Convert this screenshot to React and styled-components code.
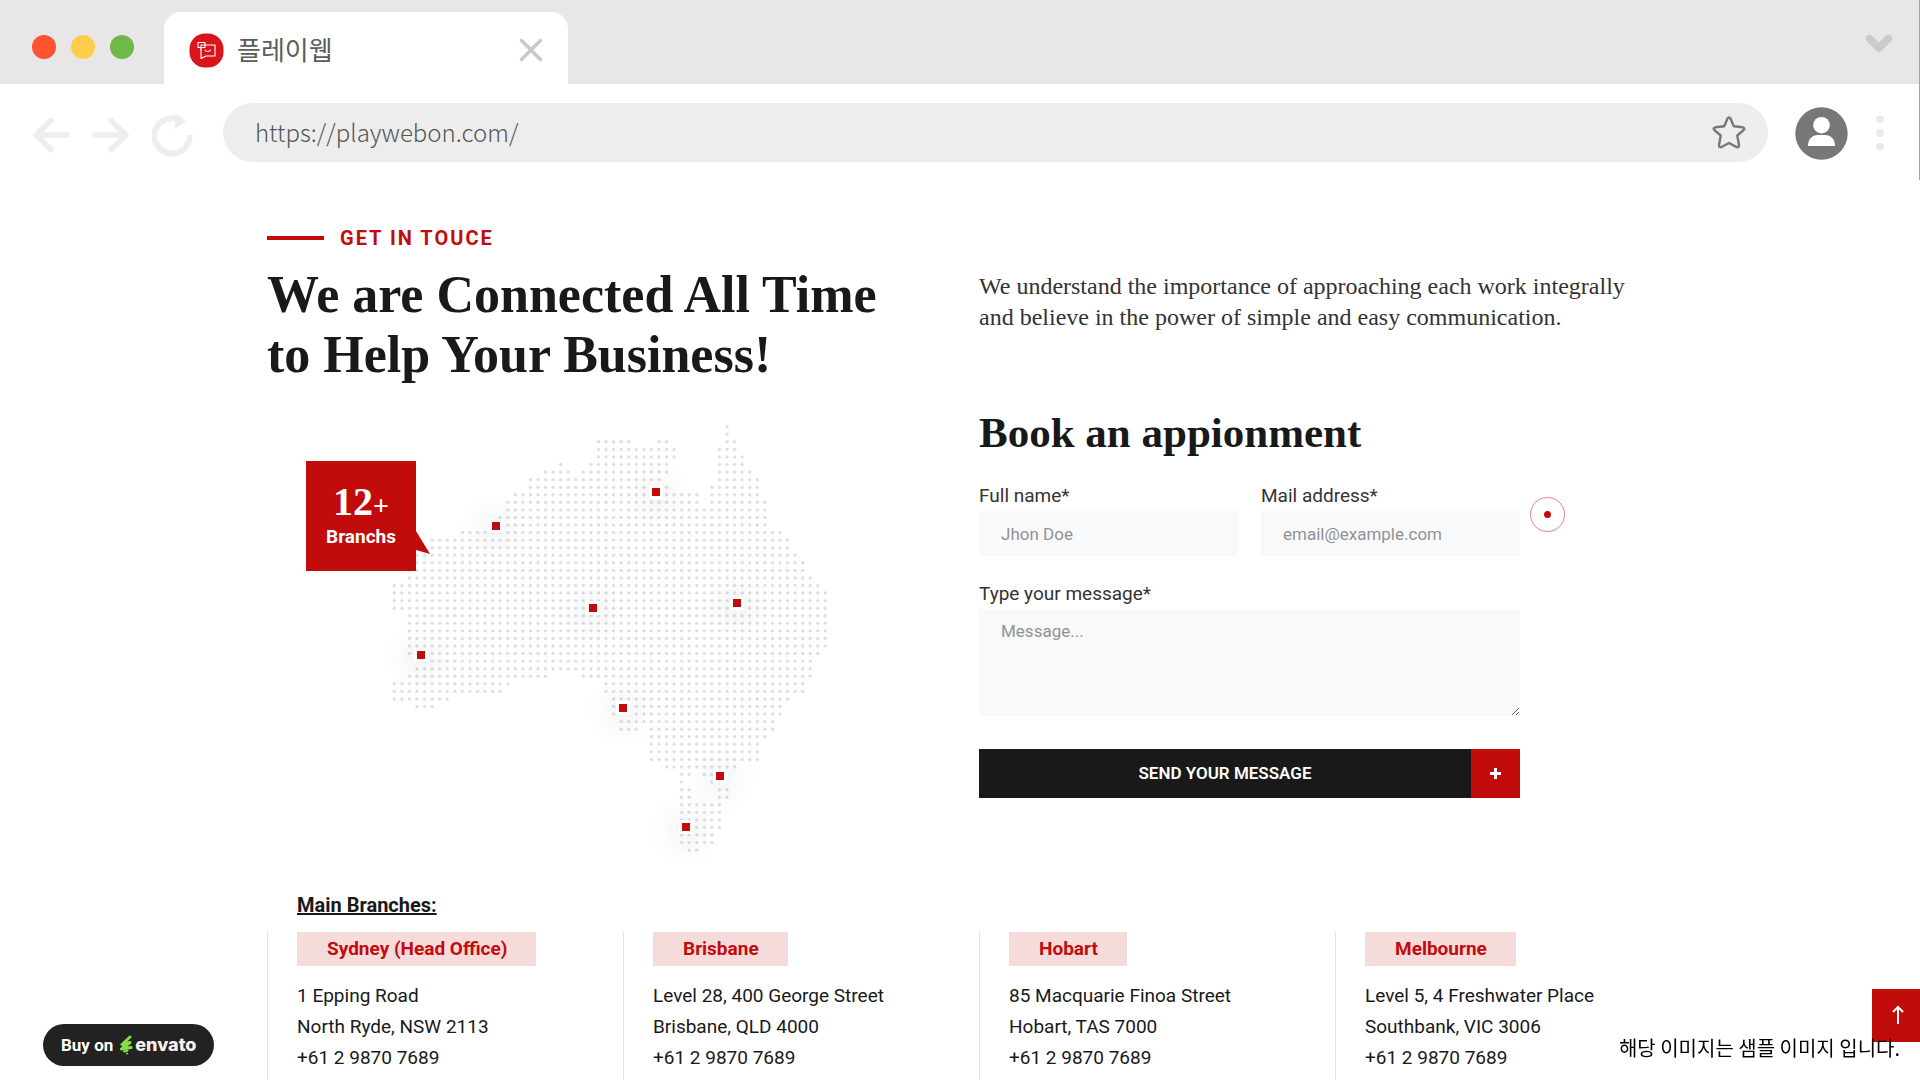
import React from "react";
import styled, { createGlobalStyle } from "styled-components";

const RED = "#c20b0b";
const INK = "#191919";
const SANS = 'Roboto, "Liberation Sans", sans-serif';
const SERIF = '"Liberation Serif", "Times New Roman", serif';
const KOREAN = '"Noto Sans CJK KR", "Noto Sans", sans-serif';

const GlobalStyle = createGlobalStyle`
  *, *::before, *::after { box-sizing: border-box; }
  body { margin: 0; background: #fff; color: ${INK}; font-family: ${SANS}; }
  h1, h2, h3, p, address { margin: 0; font-style: normal; }
  button, input, textarea { font: inherit; border: 0; padding: 0; outline: 0; border-radius: 0; }
  button { background: none; cursor: pointer; }
`;

const Page = styled.div`
  min-height: 100vh;
  display: flex;
  flex-direction: column;
`;

/* Browser frame */
const Browser = styled.header`
  height: 180px;
  border-right: 1px solid #a3a3a3;
`;
const TabStrip = styled.div`
  display: flex;
  align-items: flex-end;
  height: 84px;
  padding-right: 26px;
  background: #e7e7e7;
  border-bottom: 1px solid #e2e2e2;
`;
const WindowDots = styled.div`
  display: flex;
  gap: 15px;
  width: 164px;
  padding-left: 32px;
  margin-bottom: 24px;
`;
const WindowDot = styled.button`
  width: 24px;
  height: 24px;
  border-radius: 50%;
  background: ${(p) => p.$color};
`;
const Tab = styled.div`
  display: flex;
  align-items: center;
  width: 404px;
  height: 72px;
  margin-bottom: -1px;
  padding: 4px 25px 0 25px;
  border-radius: 17px 17px 0 0;
  background: #fff;
`;
const TabTitle = styled.span`
  flex: 1;
  margin-left: 13px;
  padding-bottom: 2px;
  font: 400 26px/36px ${KOREAN};
  color: #5c5c5c;
`;
const IconButton = styled.button`
  display: flex;
  align-items: center;
  justify-content: center;
  flex: none;
  svg { display: block; }
`;
const StripMenu = styled(IconButton)`
  margin: 0 0 30px auto;
`;
const Toolbar = styled.div`
  display: flex;
  align-items: center;
  height: 97px;
  padding: 0 35px 0 32px;
`;
const NavButtons = styled.div`
  display: flex;
  align-items: center;
  gap: 22px;
  width: 191px;
  padding-top: 5px;
`;
const AddressBar = styled.div`
  flex: 1;
  display: flex;
  align-items: center;
  height: 59px;
  padding: 0 22px 0 32px;
  border-radius: 30px;
  background: #ededed;
`;
const AddressInput = styled.input`
  flex: 1;
  min-width: 0;
  padding-bottom: 2px;
  background: none;
  font: 300 24px/36px ${KOREAN};
  color: #555;
`;
const Avatar = styled(IconButton)`
  margin: 2px 28px 0 27px;
`;

/* Contact page */
const Main = styled.main`
  flex: 1;
  display: flex;
  flex-direction: column;
  padding: 46px 229px 0 267px;
`;
const Split = styled.section`
  display: grid;
  grid-template-columns: 1fr 1fr;
`;
const Eyebrow = styled.p`
  display: flex;
  align-items: center;
  gap: 16px;
  font-size: 20px;
  font-weight: 700;
  line-height: 24px;
  letter-spacing: 2px;
  color: ${RED};
  &::before {
    content: "";
    width: 57px;
    height: 4px;
    background: ${RED};
  }
`;
const Title = styled.h1`
  margin-top: 15px;
  font: 700 52px/60px ${SERIF};
`;
const Lead = styled.p`
  padding-top: 45px;
  font: 400 24px/31px ${SERIF};
  color: #333;
`;
const FormTitle = styled.h2`
  margin-top: 76px;
  font: 700 43px/48px ${SERIF};
`;

const MapCanvas = styled.div`
  position: relative;
  width: 530px;
  height: 438px;
  margin: 37px 0 0 39px;
  padding-left: 84px;
`;
const DotMap = styled.svg`
  display: block;
`;
const Pin = styled.span`
  position: absolute;
  width: 14px;
  height: 14px;
  border: 3px solid #fff;
  background: ${RED};
  box-shadow: 0 3px 30px rgba(0, 0, 0, 0.28);
`;
const Badge = styled.div`
  position: absolute;
  left: 0;
  top: 39px;
  width: 110px;
  height: 110px;
  padding-top: 20px;
  background: ${RED};
  color: #fff;
  text-align: center;
`;
const BadgeTail = styled.svg`
  position: absolute;
  left: 110px;
  top: 70px;
`;
const BadgeNumber = styled.strong`
  display: block;
  font: 700 40px/42px ${SERIF};
  span { font-size: 28px; }
`;
const BadgeText = styled.span`
  display: block;
  font-size: 19px;
  font-weight: 700;
  line-height: 20px;
`;

const Form = styled.form`
  display: grid;
  grid-template-columns: 1fr 1fr;
  column-gap: 23px;
  width: 541px;
  margin-top: 27px;
`;
const Field = styled.div`
  display: flex;
  flex-direction: column;
  gap: 3px;
  margin-bottom: ${(p) => (p.$wide ? 33 : 26)}px;
  grid-column: ${(p) => (p.$wide ? "1 / -1" : "auto")};
`;
const Label = styled.label`
  font-size: 19px;
  line-height: 24px;
  color: #333;
`;
const TextInput = styled.input`
  width: 100%;
  height: 45px;
  padding: 0 22px;
  background: #f8f9fb;
  font-size: 17px;
  &::placeholder { color: #929292; opacity: 1; }
`;
const TextBox = styled.textarea`
  display: block;
  width: 100%;
  height: 107px;
  padding: 11px 22px;
  background: #f8f9fb;
  font-size: 17px;
  line-height: 22px;
  resize: vertical;
  &::placeholder { color: #929292; opacity: 1; }
`;
const Submit = styled.button`
  grid-column: 1 / -1;
  display: flex;
  height: 49px;
  background: ${INK};
  color: #fff;
  font-size: 17px;
  font-weight: 600;
  line-height: 49px;
`;
const SubmitText = styled.span`
  flex: 1;
  text-align: center;
`;
const SubmitMark = styled.span`
  display: flex;
  align-items: center;
  justify-content: center;
  width: 49px;
  height: 49px;
  background: ${RED};
`;

const BranchesTitle = styled.h3`
  margin: 31px 0 13px 30px;
  font-size: 20px;
  font-weight: 700;
  line-height: 28px;
  text-decoration: underline;
`;
const Branches = styled.section`
  flex: 1;
  display: grid;
  grid-template-columns: repeat(4, 1fr);
`;
const Branch = styled.div`
  padding-left: 29px;
  border-left: 1px solid #e2e2e2;
`;
const City = styled.h3`
  width: fit-content;
  padding: 0 29px 0 30px;
  background: #f6dbdb;
  color: ${RED};
  font-size: 19px;
  font-weight: 700;
  line-height: 34px;
`;
const Address = styled.address`
  margin-top: 14px;
  font-size: 19px;
  line-height: 31px;
  white-space: pre-line;
`;

/* Overlays */
const PointerRing = styled.span`
  position: absolute;
  left: 1530px;
  top: 497px;
  display: flex;
  align-items: center;
  justify-content: center;
  width: 35px;
  height: 35px;
  border: 1px solid #e28585;
  border-radius: 50%;
  &::after {
    content: "";
    width: 7px;
    height: 7px;
    border-radius: 50%;
    background: ${RED};
  }
`;
const BuyLink = styled.a`
  position: fixed;
  left: 43px;
  bottom: 14px;
  display: flex;
  align-items: center;
  height: 42px;
  padding: 0 17px 0 18px;
  border-radius: 21px;
  background: #222;
  color: #fff;
  font-size: 17px;
  font-weight: 700;
  text-decoration: none;
  svg { margin: 0 2px 0 6px; }
`;
const Wordmark = styled.span`
  font: 800 18px/24px Inter, sans-serif;
  color: #fbeee9;
`;
const ToTop = styled.button`
  position: fixed;
  right: 0;
  bottom: 38px;
  display: flex;
  justify-content: center;
  width: 48px;
  height: 53px;
  padding: 16px 0 0 4px;
  background: ${RED};
`;
const SampleNote = styled.p`
  position: fixed;
  right: 20px;
  bottom: 18px;
  font: 400 20px/28px ${KOREAN};
  color: #000;
`;

/* Filled column spans of every row of the dotted map, top to bottom. */
const ROWS = [
  [[44, 44]], [[44, 44]], [[27, 31], [35, 36], [44, 45]], [[27, 37], [43, 45]],
  [[27, 37], [43, 46]], [[22, 22], [26, 36], [43, 46]], [[20, 23], [25, 36], [43, 47]],
  [[18, 35], [43, 48]], [[18, 36], [42, 48]], [[16, 40], [42, 48]], [[15, 40], [42, 49]],
  [[15, 49]], [[14, 49]], [[14, 49]], [[9, 51]], [[5, 52]], [[4, 52]], [[3, 53]],
  [[3, 54]], [[2, 54]], [[2, 55]], [[0, 56]], [[0, 57]], [[0, 57]], [[0, 57]],
  [[2, 57]], [[2, 57]], [[2, 57]], [[2, 57]], [[2, 57]], [[2, 56]], [[3, 55]], [[3, 55]],
  [[2, 20], [25, 55]], [[0, 15], [28, 54]], [[0, 14], [28, 54]], [[0, 7], [29, 52]],
  [[3, 5], [29, 51]], [[29, 51]], [[30, 50]], [[30, 32], [34, 50]], [[34, 49]],
  [[34, 48]], [[34, 48]], [[34, 48]], [[36, 45]], [[38, 39], [41, 43]], [[38, 38], [42, 43]],
  [[38, 39], [43, 44]], [[38, 39], [43, 44]], [[38, 43]], [[38, 43]], [[38, 43]],
  [[38, 43]], [[38, 42]], [[38, 42]], [[39, 40]],
];
const STEP = 7.562;
const DOTS = ROWS.flatMap((spans, row) =>
  spans.flatMap(([from, to]) =>
    Array.from({ length: to - from + 1 }, (_, i) => ({
      x: 4.3 + (from + i) * STEP,
      y: 4.7 + row * STEP,
    }))
  )
);

const PINS = [
  [189, 104], [286, 186], [114, 233], [349, 70],
  [430, 181], [316, 286], [413, 354], [379, 405],
];

const BRANCHES = [
  { city: "Sydney (Head Office)", lines: "1 Epping Road\nNorth Ryde, NSW 2113\n+61 2 9870 7689" },
  { city: "Brisbane", lines: "Level 28, 400 George Street\nBrisbane, QLD 4000\n+61 2 9870 7689" },
  { city: "Hobart", lines: "85 Macquarie Finoa Street\nHobart, TAS 7000\n+61 2 9870 7689" },
  { city: "Melbourne", lines: "Level 5, 4 Freshwater Place\nSouthbank, VIC 3006\n+61 2 9870 7689" },
];

function Favicon() {
  return (
    <svg width="35" height="35" viewBox="0 0 35 35" fill="none">
      <rect x="0.5" y="0.5" width="34" height="34" rx="15.500" fill="#d9151b" />
      <g stroke="#fff" strokeWidth="1.1" strokeLinejoin="round" strokeLinecap="round">
        <path d="M16 12H26v11H17l-5 2.500V14.500" />
        <path d="M12 14.500H9v-5h7v5h-2.500M12 17v-5h4" />
        <path d="M16 17c1 2 4.500 2 5.500 0" />
      </g>
    </svg>
  );
}

function BrowserFrame() {
  return (
    <Browser>
      <TabStrip>
        <WindowDots>
          <WindowDot $color="#ff5331" aria-label="Close window" />
          <WindowDot $color="#ffcd4c" aria-label="Minimize window" />
          <WindowDot $color="#6fb948" aria-label="Maximize window" />
        </WindowDots>
        <Tab>
          <Favicon />
          <TabTitle>플레이웹</TabTitle>
          <IconButton aria-label="Close tab">
            <svg width="24" height="24" viewBox="0 0 24 24" stroke="#c9c9c9" strokeWidth="3.500" strokeLinecap="round">
              <path d="M2.500 2.500l19 19M21.500 2.500l-19 19" />
            </svg>
          </IconButton>
        </Tab>
        <StripMenu aria-label="Tab menu">
          <svg width="28" height="19" viewBox="0 0 28 19" fill="none" stroke="#cbcbcb" strokeWidth="7.500" strokeLinecap="round" strokeLinejoin="round">
            <path d="M4.500 4.500l9.500 9.500 9.500-9.500" />
          </svg>
        </StripMenu>
      </TabStrip>
      <Toolbar>
        <NavButtons>
          <IconButton aria-label="Back">
            <svg width="38" height="36" viewBox="0 0 38 36" fill="none" stroke="#eee" strokeWidth="5.500" strokeLinecap="round" strokeLinejoin="round">
              <path d="M19 3.500L4 18l15 14.500M4 18h31" />
            </svg>
          </IconButton>
          <IconButton aria-label="Forward">
            <svg width="38" height="36" viewBox="0 0 38 36" fill="none" stroke="#eee" strokeWidth="5.500" strokeLinecap="round" strokeLinejoin="round">
              <path d="M19 3.500L34 18 19 32.500M34 18H3" />
            </svg>
          </IconButton>
          <IconButton aria-label="Reload">
            <svg width="42" height="44" viewBox="0 0 42 44" fill="none">
              <path d="M37.600 22A17.600 17.600 0 1 1 24 5.800" stroke="#eee" strokeWidth="6" />
              <path d="M23 0l11 8L23 16z" fill="#eee" />
            </svg>
          </IconButton>
        </NavButtons>
        <AddressBar>
          <AddressInput aria-label="Address" defaultValue="https://playwebon.com/" />
          <IconButton aria-label="Bookmark">
            <svg width="34" height="33" viewBox="0 0 34 33" fill="none" stroke="#777" strokeWidth="2.400" strokeLinejoin="round">
              <path d="M15.400 2.700Q17 0 18.600 2.700L21.800 10.300 30.600 11.300Q33.500 12 31.500 14.200L25.300 19.500 27 29.300Q27 32 24.500 31L17 27 9.500 31Q7 32 7 29.300L8.700 19.500 2.500 14.200Q0.500 12 3.400 11.300L12.200 10.300Z" />
            </svg>
          </IconButton>
        </AddressBar>
        <Avatar aria-label="Profile">
          <svg width="53" height="53" viewBox="0 0 53 53">
            <circle cx="26.500" cy="26.500" r="26.200" fill="#777" />
            <circle cx="26.500" cy="18.200" r="8.300" fill="#fff" />
            <path d="M13 39c0-7 4-11 10-11h7c6 0 10 4 10 11z" fill="#fff" />
          </svg>
        </Avatar>
        <IconButton aria-label="Menu">
          <svg width="8" height="36" viewBox="0 0 8 36" fill="#eaeaea">
            <circle cx="4" cy="4.500" r="4" />
            <circle cx="4" cy="18" r="4" />
            <circle cx="4" cy="31.500" r="4" />
          </svg>
        </IconButton>
      </Toolbar>
    </Browser>
  );
}

function BranchMap() {
  return (
    <MapCanvas>
      <DotMap width="440" height="438" fill="#e0e0e0">
        {DOTS.map((d) => (
          <circle key={`${d.x}-${d.y}`} cx={d.x} cy={d.y} r="1.700" />
        ))}
      </DotMap>
      {PINS.map(([x, y]) => (
        <Pin key={`${x}-${y}`} style={{ left: x - 6, top: y - 7 }} />
      ))}
      <Badge>
        <BadgeNumber>12<span>+</span></BadgeNumber>
        <BadgeText>Branchs</BadgeText>
        <BadgeTail width="15" height="24" viewBox="0 0 15 24">
          <path d="M0 0L14 23 0 19z" fill={RED} />
        </BadgeTail>
      </Badge>
    </MapCanvas>
  );
}

function ContactForm() {
  return (
    <Form onSubmit={(e) => e.preventDefault()}>
      <Field>
        <Label htmlFor="name">Full name*</Label>
        <TextInput id="name" placeholder="Jhon Doe" />
      </Field>
      <Field>
        <Label htmlFor="mail">Mail address*</Label>
        <TextInput id="mail" type="email" placeholder="email@example.com" />
      </Field>
      <Field $wide>
        <Label htmlFor="message">Type your message*</Label>
        <TextBox id="message" placeholder="Message..." />
      </Field>
      <Submit type="submit">
        <SubmitText>SEND YOUR MESSAGE</SubmitText>
        <SubmitMark>
          <svg width="11" height="11" viewBox="0 0 11 11" stroke="#fff" strokeWidth="3">
            <path d="M5.500 0v11M0 5.500h11" />
          </svg>
        </SubmitMark>
      </Submit>
    </Form>
  );
}

export default function App() {
  return (
    <Page>
      <GlobalStyle />
      <BrowserFrame />
      <Main>
        <Split>
          <div>
            <Eyebrow>GET IN TOUCE</Eyebrow>
            <Title>We are Connected All Time<br />to Help Your Business!</Title>
            <BranchMap />
          </div>
          <div>
            <Lead>We understand the importance of approaching each work integrally<br />and believe in the power of simple and easy communication.</Lead>
            <FormTitle>Book an appionment</FormTitle>
            <ContactForm />
          </div>
        </Split>
        <BranchesTitle>Main Branches:</BranchesTitle>
        <Branches>
          {BRANCHES.map((b) => (
            <Branch key={b.city}>
              <City>{b.city}</City>
              <Address>{b.lines}</Address>
            </Branch>
          ))}
        </Branches>
      </Main>
      <PointerRing />
      <BuyLink href="#buy">
        Buy on
        <svg width="14" height="20" viewBox="0 0 14 20" fill="none" stroke="#82e044" strokeLinecap="round" strokeLinejoin="round">
          <path d="M11 2L3 9.500 11 7.500 2.500 14 12 12.500" strokeWidth="3" />
          <path d="M5 16.500l3.500-1M8 18.500v0" strokeWidth="2" />
        </svg>
        <Wordmark>envato</Wordmark>
      </BuyLink>
      <ToTop aria-label="Back to top">
        <svg width="12" height="19" viewBox="0 0 12 19" fill="none" stroke="#fff" strokeWidth="2">
          <path d="M6 19V2M1 7l5-5 5 5" />
        </svg>
      </ToTop>
      <SampleNote>해당 이미지는 샘플 이미지 입니다.</SampleNote>
    </Page>
  );
}
